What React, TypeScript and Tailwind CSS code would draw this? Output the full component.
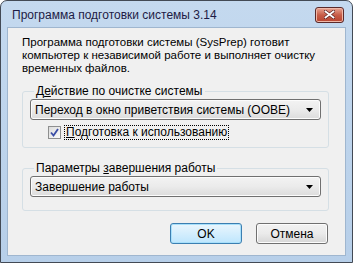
import React from "react";

function Combo({ text }: { text: string }) {
  return (
    <div className="flex h-[21px] items-center justify-between rounded-[3px] border border-[#707070] bg-gradient-to-b from-[#f3f3f3] via-[#ebebeb] to-[#dcdcdc] pl-[4px] pr-[7px] shadow-[inset_0_0_0_1px_#fcfcfc]">
      <span className="text-[12px] leading-none text-black">{text}</span>
      <svg width="7" height="4" viewBox="0 0 7 4">
        <path d="M0 0h7L3.5 4z" fill="#000" />
      </svg>
    </div>
  );
}

function Button({ label, focused }: { label: string; focused?: boolean }) {
  return (
    <div
      className={
        focused
          ? "flex h-[21px] w-[72px] items-center justify-center rounded-[3px] border border-[#3c7fb1] bg-gradient-to-b from-[#eaf6fd] to-[#bee6fd] text-[12px] text-black shadow-[inset_0_0_0_1px_#a8e0fb]"
          : "flex h-[21px] w-[72px] items-center justify-center rounded-[3px] border border-[#707070] bg-gradient-to-b from-[#f2f2f2] via-[#ebebeb] to-[#d6d6d6] text-[12px] text-black shadow-[inset_0_0_0_1px_#fcfcfc]"
      }
    >
      {label}
    </div>
  );
}

export default function App() {
  return (
    <div
      className="h-[264px] w-[353px] bg-white"
      style={{ fontFamily: '"Liberation Sans", Arial, sans-serif' }}
    >
      <div className="flex h-[263px] flex-col rounded-t-[7px] border border-[#434a55] bg-gradient-to-b from-[#c4d9ef] to-[#b7cfe9]">
        <div className="flex h-[26px] shrink-0 items-center justify-between pl-[11px] pr-[8px]">
          <span className="pt-[1px] text-[12px] text-[#1d1b45]">
            Программа подготовки системы 3.14
          </span>
          <div className="mt-[1px] flex h-[16px] w-[29px] items-center justify-center rounded-[3px] border border-[#5a2a2a] bg-gradient-to-b from-[#e8a593] via-[#c75d48] to-[#b8442f] shadow-[inset_0_0_0_1px_#f0b8a8]">
            <svg width="11" height="9" viewBox="0 0 11 9">
              <path
                d="M1.5 1.5l8 6M9.5 1.5l-8 6"
                stroke="#5a2020"
                strokeWidth="3.2"
                strokeLinecap="square"
              />
              <path
                d="M1.5 1.5l8 6M9.5 1.5l-8 6"
                stroke="#fff"
                strokeWidth="1.8"
                strokeLinecap="square"
              />
            </svg>
          </div>
        </div>
        <div className="mx-[6px] mb-[6px] flex-1 border border-[#9fb6cf] bg-[#f0f0f0] pl-[14px] pr-[16px] pt-[8px]">
          <p className="text-[11.5px] leading-[13px] text-black">
            Программа подготовки системы (SysPrep) готовит
            <br />
            компьютер к независимой работе и выполняет очистку
            <br />
            временных файлов.
          </p>

          <fieldset className="mt-[9px] rounded-[3px] border border-solid border-[#d5dfe5] px-[7px] pb-[7px] pt-[1px]">
            <legend className="ml-[4px] px-[2px] text-[12px] leading-[14px] text-black">
              Д<span className="underline">е</span>йствие по очистке системы
            </legend>
            <Combo text="Переход в окно приветствия системы (OOBE)" />
            <div className="mt-[5px] flex items-center pl-[18px]">
              <div className="flex h-[13px] w-[13px] items-center justify-center border border-[#8e8f8f] bg-gradient-to-br from-[#dcdcdc] to-[#fbfbfb]">
                <svg width="9" height="9" viewBox="0 0 9 9">
                  <path d="M1 4.5l2.5 3L8 1" stroke="#3b4ea6" strokeWidth="1.8" fill="none" />
                </svg>
              </div>
              <span className="ml-[3px] border border-dotted border-black px-[1px] text-[12px] leading-[13px] text-black">
                <span className="underline">П</span>одготовка к использованию
              </span>
            </div>
          </fieldset>

          <fieldset className="mt-[13px] rounded-[3px] border border-solid border-[#d5dfe5] px-[7px] pb-[13px] pt-[1px]">
            <legend className="ml-[4px] px-[2px] text-[12px] leading-[14px] text-black">
              Параметры <span className="underline">з</span>авершения работы
            </legend>
            <Combo text="Завершение работы" />
          </fieldset>

          <div className="mt-[12px] flex justify-end gap-[14px] pr-[1px]">
            <Button label="OK" focused />
            <Button label="Отмена" />
          </div>
        </div>
      </div>
    </div>
  );
}
